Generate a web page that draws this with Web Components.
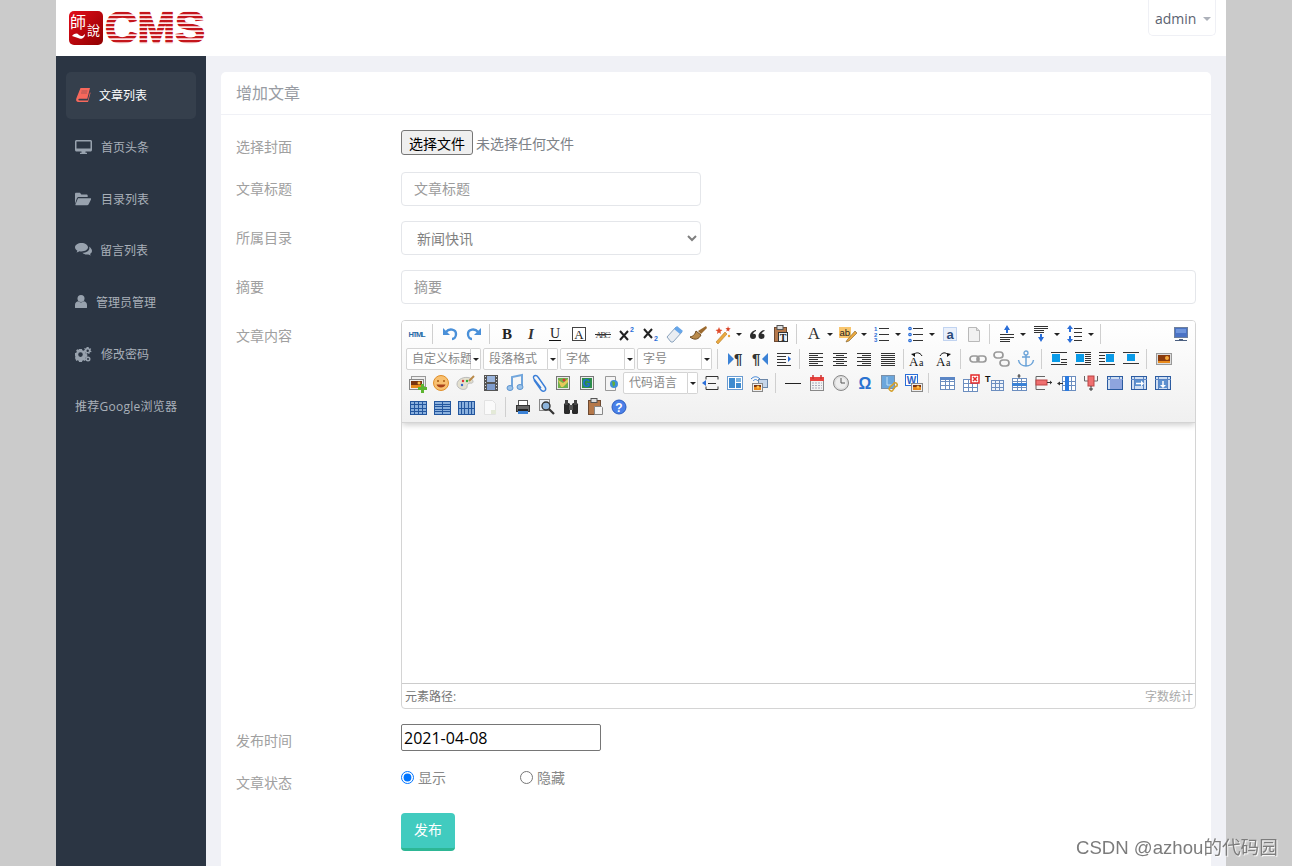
<!DOCTYPE html>
<html lang="zh">
<head>
<meta charset="utf-8">
<title>增加文章</title>
<style>
  html, body { margin: 0; height: 866px; overflow: hidden; background: #cbcbcb; }
  body { padding-left: 56px; font-family: "Open Sans", "Noto Sans CJK SC", sans-serif; }
</style>
</head>
<body>
<cms-app>
  <cms-header slot="header">admin</cms-header>
  <side-nav slot="nav">
    <nav-item active icon="book" w="13">文章列表</nav-item>
    <nav-item icon="desktop" w="15">首页头条</nav-item>
    <nav-item icon="folder" w="15" style="margin-bottom:4px">目录列表</nav-item>
    <nav-item icon="comments" w="14">留言列表</nav-item>
    <nav-item icon="user" w="10">管理员管理</nav-item>
    <nav-item icon="cogs" w="15">修改密码</nav-item>
    <nav-item style="letter-spacing:.25px">推荐Google浏览器</nav-item>
  </side-nav>
  <form-card slot="main" heading="增加文章">
    <form-row label="选择封面" style="--h:42px"><file-field></file-field></form-row>
    <form-row label="文章标题" style="--h:49px"><text-field placeholder="文章标题" style="width:300px;flex:none"></text-field></form-row>
    <form-row label="所属目录" style="--h:49px"><select-field style="width:300px"></select-field></form-row>
    <form-row label="摘要" style="--h:50px"><text-field placeholder="摘要"></text-field></form-row>
    <form-row label="文章内容" style="--h:404px;--lt:5px"><rich-editor></rich-editor></form-row>
    <form-row label="发布时间" style="--h:42px"><date-field value="2021-04-08"></date-field></form-row>
    <form-row label="文章状态" style="--h:47px">
      <radio-field checked style="width:119px">显示</radio-field><radio-field>隐藏</radio-field>
    </form-row>
    <form-row style="--h:40px"><submit-button>发布</submit-button></form-row>
  </form-card>
</cms-app>

<script>
function shadow(el, html) {
  el.attachShadow({ mode: 'open' }).innerHTML = html;
}

class CmsApp extends HTMLElement {
  constructor() {
    super();
    shadow(this, `
    <style>
      :host { display: grid; width: 1170px; height: 866px; grid-template: 56px 1fr / 150px 1fr; background: #f0f1f6; }
      .top { grid-column: 1 / 3; }
      .mark { position: fixed; left: 1076px; top: 835px; font: 18.6px/26px "Liberation Sans", "Noto Sans CJK SC", sans-serif;
        color: #7c7c7c; text-shadow: 1px 1px 1px #fff; white-space: nowrap; }
    </style>
    <div class="top"><slot name="header"></slot></div>
    <slot name="nav"></slot>
    <slot name="main"></slot>
    <div class="mark">CSDN @azhou的代码园</div>`);
  }
}

class CmsHeader extends HTMLElement {
  constructor() {
    super();
    shadow(this, `
    <style>
      :host { display: flex; height: 56px; background: #fff; justify-content: space-between; align-items: flex-start; padding: 0 10px 0 13px; box-sizing: border-box; }
      svg { display: block; }
      svg text { font-family: "Liberation Sans", sans-serif; }
      svg text.logo-cjk { font-family: "Noto Sans CJK TC", sans-serif; }
      .user { width: 68px; height: 36px; box-sizing: border-box; border: 1px solid #eff0f5; border-top: 0; border-radius: 0 0 5px 5px;
        display: flex; align-items: center; padding: 2px 0 0 6px; gap: 6px; font-size: 14px; color: #5b6270; }
      .caret { width: 0; height: 0; border: 4px solid transparent; border-top-color: #adb1ba; border-bottom: 0; margin-left: 1px; }
    </style>
    <svg width="140" height="56" viewBox="0 0 140 56">
      <defs>
        <linearGradient id="red" x1="0" y1="0" x2="1" y2="1"><stop offset="0" stop-color="#e30d1a"/><stop offset="1" stop-color="#8f0000"/></linearGradient>
        <pattern id="stripe" width="4" height="4" patternUnits="userSpaceOnUse">
          <rect width="4" height="2.500" fill="#c4161c"/><rect y="2.500" width="4" height="1.500" fill="#fbe6e6"/>
        </pattern>
      </defs>
      <rect y="11" width="34" height="34" rx="5" fill="url(#red)"/>
      <text class="logo-cjk" x="1" y="28" font-size="16" fill="#fff">師</text>
      <text class="logo-cjk" x="18" y="35" font-size="13" fill="#fff">說</text>
      <path d="M3 36c3-3 5-3 7-1 3 2 4 1 6-1 0 4-4 6-7 4-2-1-4-1-6-2z" fill="#fff"/>
      <text x="36" y="43" font-size="45" font-weight="700" fill="url(#stripe)" stroke="url(#stripe)" stroke-width="1.600">CMS</text>
    </svg>
    <div class="user"><slot></slot><span class="caret"></span></div>`);
  }
}

class SideNav extends HTMLElement {
  constructor() {
    super();
    shadow(this, `
    <style>:host { display: block; background: #2b3543; padding: 16px 10px 0; box-sizing: border-box; }</style>
    <slot></slot>`);
  }
}

const NAV_ICONS = {
  book: '<path d="M4.500 0H14l-2.700 10.800H3.300c-1.300 0-1.300 1.700 0 1.700h8.500L14 4.300l.5.700-2.500 9H2.500C.5 14-.3 12.500.3 10.500z"/><path d="M5.500 3h6M5 5h6" stroke="#2b3543" stroke-width=".8" opacity=".45"/>',
  desktop: '<path fill-rule="evenodd" d="M1.500 0h14c.8 0 1.500.7 1.500 1.500v8.500c0 .8-.7 1.500-1.500 1.500H10.500v1.200h1.500V14H5v-1.300h1.500v-1.200H1.500C.7 11.500 0 10.800 0 10V1.500C0 .7.700 0 1.500 0zM1.500 1.500V8.500h14V1.500z"/>',
  folder: '<path d="M0 12V2c0-.7.5-1.200 1.200-1.200H5l1.300 1.700h5.200c.7 0 1.200.5 1.200 1.200v1.300H4C3 5 2.300 5.500 1.900 6.300z"/><path d="M3 6.200h12.300c.7 0 1 .6.700 1.200l-2.500 5.100c-.3.5-.7.800-1.300.800H1.200c-.7 0-1-.6-.7-1.100z"/>',
  comments: '<path d="M6.500 0C3 0 0 1.900 0 4.300c0 1.400 1 2.600 2.400 3.400-.2.700-.6 1.300-1 1.800 1.200-.2 2.200-.7 3-1.200.7.100 1.400.2 2.100.2 3.600 0 6.500-1.900 6.500-4.200S10.100 0 6.500 0z"/><path d="M14 3.500c.3.400.4 1 .4 1.500 0 2.800-3.200 4.700-7 4.800.9 1.100 2.600 1.800 4.500 1.800.5 0 1-.1 1.500-.2.700.5 1.500.8 2.500 1-.4-.4-.7-.9-.8-1.500 1.100-.7 1.900-1.700 1.900-2.900 0-1.700-1.100-3.100-3-4.500z"/>',
  user: '<circle cx="6" cy="3.500" r="3.500"/><path d="M0 12.500V10c0-2 1.300-3.500 3-3.700.8.700 1.900 1.100 3 1.100s2.200-.4 3-1.100c1.700.2 3 1.700 3 3.700v2.500c0 .5-.4.500-1 .5H1c-.6 0-1 0-1-.5z"/>',
  cogs: '<path fill-rule="evenodd" d="M4 3h3l.3 1.300 1.200.5 1.200-.7 1.500 1.500-.7 1.200.5 1.200 1.300.3v2.400l-1.300.3-.5 1.200.7 1.200-1.500 1.500-1.200-.7-1.200.5-.3 1.300H4l-.3-1.300-1.200-.5-1.200.7L0 11.900l.4-1.200L0 9.500V7l1.300-.2.500-1.200-.7-1.200 1.200-1.200 1.200.6.300-.1zM5.500 6.300a2.300 2.300 0 100 4.600 2.300 2.300 0 000-4.600z" transform="translate(0 -1)"/><path fill-rule="evenodd" d="M13 0l.8.2.1 1 .9.5.9-.5.5.8-.6.8v1l.9.5-.3.900-1-.1-.7.700.1 1-.9.300-.5-.9h-1l-.6.800-.9-.4.2-1-.6-.7-1 .1-.2-.9.8-.6v-1l-.7-.6.4-.8 1 .3.800-.5.200-1zM12.700 2.600a1.200 1.200 0 100 2.400 1.200 1.200 0 000-2.400z"/><circle cx="13" cy="12" r="2.500"/><circle cx="13" cy="12" r="1" fill="#2b3543"/>'
};

class NavItem extends HTMLElement {
  constructor() {
    super();
    const icon = NAV_ICONS[this.getAttribute('icon')];
    const w = this.getAttribute('w');
    shadow(this, `
    <style>
      :host { display: flex; align-items: center; height: 47px; box-sizing: border-box; margin-bottom: 5px; padding: 0 0 2px 9px; gap: 11px;
        border-radius: 5px; font-size: 12px; color: #a9b0b9; white-space: nowrap; }
      :host([active]) { background: #353f4c; color: #fff; padding-left: 10px; gap: 10px; }
      svg { fill: #98a2ae; overflow: visible; flex: none; }
      :host([active]) svg { fill: #f7685c; }
    </style>
    ${icon ? `<svg width="${w}" height="14" viewBox="0 0 ${w} 14">${icon}</svg>` : ''}
    <span><slot></slot></span>`);
  }
}

class FormCard extends HTMLElement {
  constructor() {
    super();
    shadow(this, `
    <style>
      :host { display: block; margin: 16px 15px 0; background: #fff; border-radius: 5px 5px 0 0; }
      h2 { margin: 0; height: 43px; box-sizing: border-box; padding-left: 15px; font: inherit; font-size: 16px; line-height: 42px; color: #989ca3; border-bottom: 1px solid #f0f1f6; }
      .body { padding: 15px 15px 0; }
    </style>
    <h2>${this.getAttribute('heading')}</h2>
    <div class="body"><slot></slot></div>`);
  }
}

class FormRow extends HTMLElement {
  constructor() {
    super();
    shadow(this, `
    <style>
      :host { display: grid; grid-template-columns: 165px 1fr; height: var(--h); }
      label { font-size: 14px; line-height: 21px; padding-top: var(--lt, 6px); color: #a0a0a0; }
      .ctl { display: flex; align-items: flex-start; min-width: 0; }
    </style>
    <label>${this.getAttribute('label') || ''}</label>
    <div class="ctl"><slot></slot></div>`);
  }
}

class FileField extends HTMLElement {
  constructor() {
    super();
    shadow(this, `
    <style>
      :host { display: flex; align-items: center; gap: 3px; font-size: 14px; color: #7d8288; }
      button { width: 72px; height: 25px; padding: 0; box-sizing: border-box; font: inherit; color: #000; background: #efefef; border: 1px solid #767676; border-radius: 3px; }
    </style>
    <button type="button">选择文件</button><span>未选择任何文件</span>`);
  }
}

class TextField extends HTMLElement {
  constructor() {
    super();
    shadow(this, `
    <style>
      :host { display: block; flex: 1; }
      input { display: block; width: 100%; height: 34px; box-sizing: border-box; padding: 0 12px 2px; font: inherit; font-size: 14px; border: 1px solid #e4e6ea; border-radius: 4px; outline: 0; background: #fff; }
      input::placeholder { color: #9b9b9b; opacity: 1; }
    </style>
    <input type="text" placeholder="${this.getAttribute('placeholder')}">`);
  }
}

class SelectField extends HTMLElement {
  constructor() {
    super();
    shadow(this, `
    <style>
      :host { display: block; }
      select { display: block; width: 100%; height: 34px; box-sizing: border-box; padding: 0 8px 0 11px; font: inherit; font-size: 14px; color: #7f7f7f; border: 1px solid #e4e6ea; border-radius: 4px; background: #fff; outline: 0; }
    </style>
    <select><option>新闻快讯</option></select>`);
  }
}

class DateField extends HTMLElement {
  constructor() {
    super();
    shadow(this, `
    <style>
      :host { display: block; }
      input { display: block; width: 200px; height: 27px; box-sizing: border-box; padding: 0 2px; font: 16px "Open Sans", sans-serif; color: #000; border: 1px solid #767676; border-radius: 2px; outline: 0; }
    </style>
    <input type="text" value="${this.getAttribute('value')}">`);
  }
}

class RadioField extends HTMLElement {
  constructor() {
    super();
    const checked = this.hasAttribute('checked') ? 'checked' : '';
    shadow(this, `
    <style>
      :host { display: flex; align-items: center; font-size: 14px; color: #888; height: 22px; }
      input { width: 13px; height: 13px; margin: 0 4px 0 0; accent-color: #0075ff; }
    </style>
    <input type="radio" name="status" ${checked}><slot></slot>`);
  }
}

class SubmitButton extends HTMLElement {
  constructor() {
    super();
    shadow(this, `
    <style>
      :host { display: block; }
      button { display: block; width: 54px; height: 38px; padding: 0 0 3px; font: inherit; font-size: 14px; color: #fff; background: #41cbbf; border: 0; border-bottom: 3px solid #2db795; border-radius: 4px; }
    </style>
    <button type="button"><slot></slot></button>`);
  }
}

// toolbar icons, all on a 20x20 box
const ink = '#333';
const blue = '#3b82d6';
const lines = (x1, x2, ys, c = ink) => `<path d="${ys.map(y => `M${x1} ${y}.5H${x2}`).join('')}" stroke="${c}" fill="none"/>`;
const glyph = (t, x, y, size, extra = '') => `<text x="${x}" y="${y}" font-size="${size}" ${extra}>${t}</text>`;
const serif = 'class="s"';
const grid = (x, y, w, h, cols, rows, stroke = '#6c8ebf', fill = '#fff') => {
  let d = '';
  for (let i = 1; i < cols; i++) d += `M${x + Math.round(w * i / cols)}.5 ${y}v${h}`;
  for (let i = 1; i < rows; i++) d += `M${x} ${y + Math.round(h * i / rows)}.5h${w}`;
  return `<rect x="${x}.5" y="${y}.5" width="${w}" height="${h}" fill="${fill}" stroke="${stroke}"/><path d="${d}" stroke="${stroke}" fill="none"/>`;
};
const picture = (x, y, w, h) => `<rect x="${x}.5" y="${y}.5" width="${w}" height="${h}" fill="#eee" stroke="#888"/><rect x="${x + 2}" y="${y + 2}" width="${w - 3}" height="${h - 3}" fill="#7a3410"/><path d="M${x + 2} ${y + h - 4}h${w - 3}v3h-${w - 3}z" fill="#e88a1c"/><circle cx="${x + w - 4}" cy="${y + 4}" r="1.500" fill="#ffc04a"/>`;
// the merge-cell icons share one frame: dark edge, pale strips, blue middle
const cellFrame = `<rect x="2.500" y="3.500" width="15" height="13" fill="#cfdef2" stroke="#2b5ba0"/><path d="M2 6.500h16M5.500 4v12M14.500 4v12" stroke="#5b86c5"/>`;

const ICONS = {
  html: glyph('HTML', 10, 13, 7.5, 'font-weight="700" text-anchor="middle" fill="#2b6ca8" textLength="17"'),
  undo: `<path d="M6 8c3-4 10-3 10 2 0 3-2 5-4 5" fill="none" stroke="#4a90d9" stroke-width="2.400"/><path d="M3 4v7h7z" fill="#4a90d9"/>`,
  redo: `<g transform="translate(20) scale(-1 1)"><path d="M6 8c3-4 10-3 10 2 0 3-2 5-4 5" fill="none" stroke="#4a90d9" stroke-width="2.400"/><path d="M3 4v7h7z" fill="#4a90d9"/></g>`,
  bold: glyph('B', 10, 15, 15, `${serif} font-weight="700" text-anchor="middle" fill="#222"`),
  italic: glyph('I', 10, 15, 15, `${serif} font-weight="700" font-style="italic" text-anchor="middle" fill="#333"`),
  underline: glyph('U', 10, 14, 14, `${serif} text-anchor="middle" fill="#222"`) + lines(4, 16, [16], '#111'),
  fontborder: `<rect x="3.500" y="3.500" width="13" height="13" fill="#fff" stroke="#444"/>` + glyph('A', 10, 15, 13, `${serif} text-anchor="middle" fill="#222"`),
  strike: glyph('ABC', 10, 14, 9, `${serif} text-anchor="middle" fill="#444" textLength="15"`) + lines(2, 18, [10], '#333'),
  sup: `<path d="M3 7l8 9m0-9l-8 9" stroke="#222" stroke-width="2" fill="none"/>` + glyph('2', 13, 8, 7, 'font-weight="700" fill="#2a6ed8"'),
  sub: `<path d="M3 5l8 9m0-9l-8 9" stroke="#222" stroke-width="2" fill="none"/>` + glyph('2', 13, 17, 7, 'font-weight="700" fill="#2a6ed8"'),
  eraser: `<path d="M2 13l9-10 6 5-9 10H6z" fill="#e9edf2" stroke="#8ba3bd"/><path d="M9 5l6 5 3-3-6-5z" fill="#66a6ea"/>`,
  brush: `<path d="M1 13c4-1 5-3 6-6l5 4c-2 4-6 6-11 2z" fill="#b98a4a" stroke="#6f4c22"/><path d="M9 7l8-5 1 2-6 6z" fill="#9c6a2e"/>`,
  wand: `<path d="M3 18l9-10 2 2-9 10z" fill="#eba93f" stroke="#b07a2a" stroke-width=".6"/><path d="M6 3l1 2.500 2.500.5-2 1.500.3 2.500L6 8.500 4 10l.5-2.500-2-1.500 2.500-.5z" fill="#e04b2a"/><path d="M15 2l.7 2 2 .5-1.600 1.200.2 2-1.300-1.100-1.700 1 .6-2-1.400-1.300 2-.2z" fill="#d9452a"/><circle cx="16" cy="12" r="1.200" fill="#e9a23b"/>`,
  quote: `<g fill="#2c2c2c"><path d="M9 6c-3 .5-6 3-6 6 0 2 1 3 3 3s3-1.200 3-3-1.400-2.500-3-2c.2-1.200 1.500-2.500 3-3z"/><path d="M17.500 6c-3 .5-6 3-6 6 0 2 1 3 3 3s3-1.200 3-3-1.400-2.500-3-2c.2-1.200 1.500-2.500 3-3z"/></g>`,
  paste: `<rect x="3.500" y="3.500" width="12" height="14" fill="#b5784a" stroke="#6d4a32"/><rect x="6" y="1.500" width="6" height="4" fill="#ddd" stroke="#555"/><rect x="7.500" y="8.500" width="9" height="9" fill="#eef3f8" stroke="#333"/>` + glyph('T', 12, 16.500, 10, `${serif} font-weight="700" text-anchor="middle" fill="#222"`),
  fontcolor: glyph('A', 10, 15, 17, `${serif} text-anchor="middle" fill="#2e2e2e"`),
  hilite: `<rect x="1" y="3" width="12" height="11" fill="#f8c56d"/>` + glyph('ab', 1.500, 12, 9.500, 'font-weight="400" fill="#222"') + `<path d="M9 16l8-9 2 2-8 8-3 1z" fill="#eba93f" stroke="#7b5d2a" stroke-width=".6"/>`,
  ol: glyph('1', 2, 7, 6, 'font-weight="700" fill="#2a6ed8"') + glyph('2', 2, 12.500, 6, 'font-weight="700" fill="#2a6ed8"') + glyph('3', 2, 18, 6, 'font-weight="700" fill="#2a6ed8"') + lines(7, 17, [4, 10, 16]),
  ul: `<g fill="none" stroke="#2a6ed8" stroke-width="1.300"><circle cx="4" cy="4.500" r="1.200"/><circle cx="4" cy="10.500" r="1.200"/><circle cx="4" cy="16.500" r="1.200"/></g>` + lines(7, 17, [4, 10, 16]),
  selectall: `<rect x="3.500" y="3.500" width="13" height="13" fill="#eaf0fb" stroke="#8fb0e4" stroke-dasharray="1 1"/>` + glyph('a', 10, 14.500, 13, 'font-weight="700" text-anchor="middle" fill="#2b4a7a"'),
  cleardoc: `<path d="M4.500 3.500h8l3 3v11h-11z" fill="#f1f1f1" stroke="#b9b9b9"/><path d="M12.500 3.500v3h3" fill="#ddd" stroke="#b9b9b9"/>`,
  rowtop: `<path d="M10 1l3 5h-2v3H9V6H7z" fill="#2a6ed8"/>` + lines(3, 17, [10, 13]) + lines(3, 13, [15, 17]),
  rowbottom: lines(3, 17, [2, 4]) + lines(3, 13, [6, 8]) + `<path d="M10 18l3-5h-2v-3H9v3H7z" fill="#2a6ed8"/>`,
  lineheight: `<path d="M5 1l3 4H6v3H4V5H2zM5 19l3-4H6v-3H4v3H2z" fill="#2a6ed8"/>` + lines(9, 17, [4, 8, 12, 16]),
  fullscreen: `<rect x="3.500" y="3.500" width="13" height="10" fill="#4a72c4" stroke="#6d7f9c"/><path d="M5 5h10v4H5z" fill="#6f95dc"/><path d="M8 15.500h4M4 16.500h12" stroke="#4b5f80"/>`,
  ltr: `<path d="M2 4l6 6-6 6z" fill="${blue}"/>` + glyph('¶', 8, 15, 15, 'font-weight="700" fill="#333"'),
  rtl: glyph('¶', 2, 15, 15, 'font-weight="700" fill="#333"') + `<path d="M18 4l-6 6 6 6z" fill="${blue}"/>`,
  indent: lines(3, 17, [4, 16]) + lines(3, 12, [7, 10, 13]) + `<path d="M17 10l-3-3v6z" fill="#2a6ed8"/>`,
  left: lines(3, 17, [4, 8, 12, 16]) + lines(3, 12, [6, 10, 14]),
  center: lines(3, 17, [4, 8, 12, 16]) + lines(6, 14, [6, 10, 14]),
  right: lines(3, 17, [4, 8, 12, 16]) + lines(8, 17, [6, 10, 14]),
  justify: lines(3, 17, [4, 6, 8, 10, 12, 14, 16]),
  aup: glyph('A', 1, 17, 13, `${serif} fill="#111"`) + glyph('a', 11, 17, 10, `${serif} fill="#111"`) + `<path d="M6 6c1-3 6-3 8 1" fill="none" stroke="#111"/><path d="M3 5l4-1v4z" fill="#111"/>`,
  adown: glyph('A', 1, 17, 13, `${serif} fill="#111"`) + glyph('a', 11, 17, 10, `${serif} fill="#111"`) + `<path d="M5 7c2-4 6-4 8-1" fill="none" stroke="#111"/><path d="M16 5l-4-1v4z" fill="#111"/>`,
  link: `<g fill="none" stroke="#9a9a9a" stroke-width="1.700"><rect x="2" y="7" width="9" height="6" rx="3"/><rect x="9" y="7" width="9" height="6" rx="3"/></g>`,
  unlink: `<g fill="none" stroke="#9a9a9a" stroke-width="1.700"><rect x="2" y="3" width="9" height="6" rx="3"/><rect x="8" y="11" width="9" height="6" rx="3"/></g>`,
  anchor: `<path d="M10 6v11M6 8h8M2.500 11c.5 4 4 6 7.500 6s7-2 7.500-6" fill="none" stroke="#6ba3d8" stroke-width="1.500"/><circle cx="10" cy="4" r="2" fill="none" stroke="#6ba3d8" stroke-width="1.300"/>`,
  imgleft: `<rect x="3" y="5" width="8" height="8" fill="#0a9be8"/>` + lines(2, 18, [3]) + lines(12, 18, [10, 13]) + lines(2, 18, [15]),
  imgright: `<rect x="3" y="5" width="8" height="8" fill="#0a9be8"/>` + lines(2, 18, [3, 15]) + lines(12, 18, [5, 7, 9, 11, 13]),
  imgnone: `<rect x="9" y="5" width="8" height="8" fill="#0a9be8"/>` + lines(2, 18, [3, 15]) + lines(2, 8, [6, 9, 12]),
  imgcenter: `<rect x="6" y="5" width="8" height="7" fill="#0a9be8"/>` + lines(2, 18, [3, 14]),
  image: `<rect x="2.500" y="4.500" width="15" height="11" fill="#ddd" stroke="#999"/><rect x="4" y="6" width="12" height="8" fill="#8a3a0c"/><path d="M4 12h12v2H4z" fill="#e88a1c"/><circle cx="13" cy="9" r="2" fill="#f4a93c"/>`,
  insertimage: `<rect x="4.500" y="3.500" width="14" height="10" fill="#eee" stroke="#999"/>` + picture(2, 6, 14, 10) + `<path d="M14 11h3v3h3v3h-3v3h-3v-3h-3v-3h3z" fill="#5cb531"/>`,
  emotion: `<circle cx="10" cy="10" r="7.500" fill="#f8c070" stroke="#e08f2a"/><circle cx="7" cy="8" r="1" fill="#a85a10"/><circle cx="13" cy="8" r="1" fill="#a85a10"/><path d="M5.500 11.500h9c-1 4-8 4-9 0z" fill="#a8421a"/>`,
  scrawl: `<path d="M2 11c0-5 8-8 13-6 4 2 4 6 0 5-2 0-3 2-3 4s-3 3-6 2-4-3-4-5z" fill="#e4e0cf" stroke="#bbb"/><circle cx="8" cy="8" r="1.200" fill="#d33"/><circle cx="12" cy="8" r="1.200" fill="#3a3"/><circle cx="7" cy="12" r="1.200" fill="#36c"/><path d="M14 8l5-5" stroke="#b98a4a" stroke-width="2"/>`,
  video: `<rect x="3" y="2" width="14" height="16" fill="#555"/><rect x="6" y="3" width="8" height="6" fill="#9ab4dc"/><rect x="6" y="11" width="8" height="6" fill="#7f9ccc"/><path d="M4 3.500h1M4 6.500h1M4 9.500h1M4 12.500h1M4 15.500h1M15 3.500h1M15 6.500h1M15 9.500h1M15 12.500h1M15 15.500h1" stroke="#ddd"/>`,
  music: `<path d="M7 14V4l10-2v11" fill="none" stroke="#72a6dc" stroke-width="2"/><ellipse cx="5" cy="15" rx="3" ry="2.500" fill="#9cc4ea" stroke="#5d94cf"/><ellipse cx="15" cy="14" rx="3" ry="2.500" fill="#9cc4ea" stroke="#5d94cf"/>`,
  clip: `<path d="M5 7l7 10c3 3 6 0 4-3L9 4C7 1 3 3 5 6l7 9" fill="none" stroke="#3b7fd8" stroke-width="1.400"/>`,
  map: `<rect x="3.500" y="3.500" width="13" height="13" fill="#e9e9e9" stroke="#777"/><rect x="5" y="5" width="10" height="10" fill="#6fb04c"/><path d="M5 7l5 3 5-4v3l-5 5H8z" fill="#e6c85a"/><circle cx="11" cy="7" r="1.500" fill="#d33"/>`,
  gmap: `<rect x="3.500" y="3.500" width="13" height="13" fill="#eee" stroke="#777"/><rect x="5" y="5" width="10" height="10" fill="#2f8f4a"/>` + glyph('G', 10, 14, 10, 'font-weight="700" text-anchor="middle" fill="#1c6bd6"'),
  webapp: `<path d="M4.500 3.500h10v14h-10z" fill="#f4f4f4" stroke="#999"/><circle cx="13" cy="11" r="4" fill="#3d8fd8"/><path d="M11 8l3 1v3l-2 2z" fill="#5fae3c"/>`,
  pagebreak: `<path d="M5 6.500V3.500h12v3M5 13.500v3h12v-3" fill="none" stroke="#333"/>` + lines(7, 15, [10], '#333') + `<path d="M1 10l4-3v6z" fill="#2a6ed8"/>`,
  template: `<rect x="2.500" y="3.500" width="15" height="13" fill="#fff" stroke="#6a9bd0"/><rect x="4" y="5" width="6" height="10" fill="#3e8bcf"/><rect x="11" y="5" width="5" height="4" fill="#7ab2e0"/><rect x="11" y="10" width="5" height="5" fill="#3e8bcf"/>`,
  background: `<path d="M2 6c3-3 6-3 9 0M4 8c2-2 3-2 5 0" fill="none" stroke="#3b82d6"/><rect x="9.500" y="6.500" width="9" height="8" fill="#c6d6ea" stroke="#6c87a8"/>` + picture(3, 10, 10, 8),
  hr: lines(2, 18, [10], '#222'),
  date: `<rect x="3.500" y="4.500" width="13" height="13" fill="#f2f2f2" stroke="#888"/><rect x="3" y="4" width="14" height="4" fill="#e8433f"/><path d="M6 2v4M14 2v4" stroke="#c33" stroke-width="1.500"/><path d="M5 10h10M5 12.500h10M5 15h10" stroke="#aab" stroke-dasharray="2 1"/>`,
  time: `<circle cx="10" cy="10" r="7.500" fill="#ddd" stroke="#888"/><circle cx="10" cy="10" r="5.500" fill="#eee"/><path d="M10 5v5h4" fill="none" stroke="#555"/>`,
  omega: glyph('Ω', 10, 15.500, 16, `text-anchor="middle" font-weight="700" fill="#2a72d0"`),
  snap: `<rect x="2.500" y="2.500" width="13" height="13" fill="#6ba6dc" stroke="#7b90a8"/><path d="M8 4v8h6" stroke="#bfe0f8" fill="none"/><path d="M10 16c1-4 4-3 5-6 2-1 4 1 3 3-2 0-3 2-4 4s-3 1-4-1z" fill="none" stroke="#d4a02c" stroke-width="1.600"/>`,
  word: `<rect x="2.500" y="1.500" width="12" height="11" fill="#fff" stroke="#2a6ed8"/>` + glyph('W', 8.500, 11, 10, 'font-weight="700" text-anchor="middle" fill="#2a5fc4"') + picture(8, 10, 11, 8),
  table: grid(3, 4, 14, 12, 3, 3, '#6c8ebf') + `<rect x="3" y="4" width="15" height="3" fill="#5b86c5"/>`,
  tabledel: grid(2, 6, 14, 12, 3, 3, '#6c8ebf') + `<rect x="10" y="2" width="8" height="8" fill="#fff" stroke="#e52a2a" stroke-width="1.500"/><path d="M12 4l4 4m0-4l-4 4" stroke="#e52a2a" stroke-width="1.500"/>`,
  tabletitle: glyph('T', 0, 9, 9, 'font-weight="700" fill="#111"') + grid(6, 7, 12, 10, 3, 3, '#6c8ebf', '#eef3fa'),
  rowins: grid(3, 5, 14, 12, 3, 4, '#6c8ebf') + `<rect x="3" y="10" width="15" height="3" fill="#3b82d6"/><path d="M10 1v4M8.500 3h3" stroke="#333"/>`,
  colright: `<path d="M3 3.500v13M3 3.500h9M3 16.500h9" fill="none" stroke="#666"/><rect x="3" y="7" width="11" height="5" fill="#ef6f6f" stroke="#b44"/><path d="M14 9.500h5" stroke="#333"/><path d="M19 9.500l-2-2v4z" fill="#333"/>`,
  colleft: grid(5, 3, 13, 14, 3, 3, '#6c8ebf') + `<rect x="8" y="3" width="4" height="15" fill="#2a7ae0"/><path d="M1 10.500h5" stroke="#333"/><path d="M0 10.500l3-2v4z" fill="#333"/>`,
  rowdel: `<path d="M3.500 3v5h13V3" fill="none" stroke="#666"/><rect x="7" y="3" width="6" height="10" fill="#ef6f6f" stroke="#b44"/><path d="M10 13v5M8 16h4" stroke="#333"/>`,
  merge: cellFrame + `<rect x="5" y="6" width="12" height="10" fill="#8ea4de"/>`,
  mergeright: cellFrame + `<rect x="6" y="7" width="8" height="6" fill="#5b90cf"/><path d="M7 10.500h6" stroke="#fff" stroke-width="1.500"/><path d="M15 10.500l-3-3v6z" fill="#fff"/>`,
  mergedown: cellFrame + `<rect x="6" y="7" width="8" height="8" fill="#5b90cf"/><path d="M10 8v5" stroke="#fff" stroke-width="1.500"/><path d="M10 15l-3-3h6z" fill="#fff"/>`,
  splitcell: grid(2, 4, 16, 13, 4, 4, '#23569e', '#8ab0dd'),
  splitrow: grid(2, 4, 16, 13, 2, 5, '#23569e', '#8ab0dd'),
  splitcol: grid(2, 4, 16, 13, 5, 2, '#23569e', '#8ab0dd'),
  faded: `<path d="M4.500 3.500h8l3 3v11h-11z" fill="#fafafa" stroke="#e2e2e2"/><path d="M11 13h5v4h-5z" fill="#e4ead8"/>`,
  print: `<rect x="5.500" y="3.500" width="9" height="6" fill="#fff" stroke="#555"/><rect x="3.500" y="8.500" width="13" height="6" fill="#666" stroke="#333"/><rect x="5" y="12" width="10" height="5" fill="#3b82d6"/><rect x="5" y="12" width="10" height="2" fill="#222"/>`,
  preview: `<rect x="2.500" y="2.500" width="10" height="11" fill="#e9eef6" stroke="#888"/><circle cx="9" cy="9" r="4" fill="#8cb3dc" stroke="#333" stroke-width="1.400"/><path d="M12 12l5 5" stroke="#333" stroke-width="2.200"/>`,
  search: `<rect x="3" y="6" width="6" height="11" rx="1.500" fill="#2a2a2a"/><rect x="11" y="6" width="6" height="11" rx="1.500" fill="#2a2a2a"/><rect x="4" y="3" width="3" height="5" fill="#444"/><rect x="13" y="3" width="3" height="5" fill="#444"/><rect x="8" y="8" width="4" height="5" fill="#555"/>`,
  drafts: `<rect x="3.500" y="3.500" width="12" height="14" fill="#b5784a" stroke="#6d4a32"/><rect x="6" y="1.500" width="6" height="4" fill="#ddd" stroke="#555"/><path d="M9.500 9.500h7l1 1v7h-8z" fill="#f4f4f4" stroke="#888"/>`,
  help: `<circle cx="10" cy="10" r="7" fill="#4a80e8" stroke="#2a5cc0"/>` + glyph('?', 10, 14.500, 12, 'font-weight="700" text-anchor="middle" fill="#fff"')
};

class ToolRow extends HTMLElement {
  constructor() {
    super();
    const parts = this.getAttribute('items').trim().split(/\s+/).map(t => this.item(t));
    shadow(this, `
    <style>
      :host { display: flex; align-items: center; height: 24px; }
      .btn { flex: none; width: 24px; height: 24px; display: flex; align-items: center; justify-content: center; }
      .btn.split { width: 34px; justify-content: flex-start; padding-left: 2px; box-sizing: border-box; }
      svg { display: block; flex: none; overflow: visible; }
      svg text { font-family: "Liberation Sans", sans-serif; }
      svg text.s { font-family: "Liberation Serif", serif; }
      .arrow { width: 0; height: 0; border: 3px solid transparent; border-top-color: #222; border-bottom: 0; margin-left: 3px; flex: none; }
      .sep { flex: none; height: 20px; box-sizing: border-box; padding-left: 3px; }
      .sep i { display: block; width: 1px; height: 20px; background: #cfcfcf; }
      .combo { flex: none; display: flex; width: 75px; height: 22px; box-sizing: border-box; font-size: 12px; color: #888; }
      .combo b { flex: 1; min-width: 0; font-weight: 400; line-height: 20px; padding-left: 5px; border: 1px solid #d4d4d4; border-radius: 2px 0 0 2px; background: #fff; white-space: nowrap; }
      .combo u { width: 9px; flex: none; border: 1px solid #d4d4d4; border-left: 0; border-radius: 0 2px 2px 0; background: #fff; display: flex; align-items: center; justify-content: center; }
      .combo u::after { content: ""; border: 3px solid transparent; border-top-color: #222; border-bottom: 0; }
      .push { flex: 1; }
    </style>
    ${parts.join('')}`);
  }

  item(t) {
    if (t === '>>') return '<span class="push"></span>';
    if (t[0] === '+') return `<span style="flex:none;width:${t.slice(1)}px"></span>`;
    if (t[0] === '|') return `<span class="sep" style="width:${t.slice(1) || 9}px"><i></i></span>`;
    if (t.startsWith('combo:')) return `<span class="combo"><b>${t.slice(6)}</b><u></u></span>`;
    const split = t.endsWith('^');
    const name = split ? t.slice(0, -1) : t;
    return `<span class="btn ${split ? 'split' : ''}"><svg width="20" height="20" viewBox="0 0 20 20">${ICONS[name]}</svg>${split ? '<span class="arrow"></span>' : ''}</span>`;
  }
}

class RichEditor extends HTMLElement {
  constructor() {
    super();
    const row1 = 'html | undo redo | bold italic underline fontborder strike sup sub eraser brush wand^ quote paste | fontcolor^ hilite^ ol^ ul^ selectall cleardoc | rowtop^ rowbottom^ lineheight^ | >> fullscreen';
    const row2 = '+1 combo:自定义标题 +2 combo:段落格式 +2 combo:字体 +2 combo:字号 +2 | +1 ltr rtl indent |8 left center right justify |6 aup +3 adown | link unlink anchor | imgleft imgright imgnone imgcenter | image';
    const row3 = 'insertimage emotion scrawl +2 video music clip map gmap webapp combo:代码语言 +1 pagebreak template background +1 | hr date time omega snap word | +1 table tabledel tabletitle rowins colright colleft rowdel merge mergeright mergedown';
    const row4 = '+1 splitcell splitrow splitcol faded | print preview search drafts help';
    shadow(this, `
    <style>
      :host { display: flex; flex-direction: column; flex: 1; height: 389px; box-sizing: border-box; border: 1px solid #d4d4d4; border-radius: 4px; background: #fff; overflow: hidden; }
      .bar { height: 102px; box-sizing: border-box; padding: 1px 2px 0 3px; background: linear-gradient(#fff, #f0f0f0); border-bottom: 1px solid #d4d4d4; box-shadow: 0 2px 6px rgba(0,0,0,.2); position: relative; }
      tool-row:nth-child(2) { margin-top: 1px; }
      .text { flex: 1; }
      .foot { height: 25px; box-sizing: border-box; border-top: 1px solid #ccc; display: flex; justify-content: space-between; align-items: center; padding: 0 2px 0 3px; font-size: 12px; color: #777; }
      .foot span + span { color: #aaa; }
    </style>
    <div class="bar">
      <tool-row items="${row1}"></tool-row>
      <tool-row items="${row2}"></tool-row>
      <tool-row items="${row3}"></tool-row>
      <tool-row items="${row4}"></tool-row>
    </div>
    <div class="text"></div>
    <div class="foot"><span>元素路径:</span><span>字数统计</span></div>`);
  }
}

customElements.define('cms-app', CmsApp);
customElements.define('cms-header', CmsHeader);
customElements.define('side-nav', SideNav);
customElements.define('nav-item', NavItem);
customElements.define('form-card', FormCard);
customElements.define('form-row', FormRow);
customElements.define('file-field', FileField);
customElements.define('text-field', TextField);
customElements.define('select-field', SelectField);
customElements.define('date-field', DateField);
customElements.define('radio-field', RadioField);
customElements.define('submit-button', SubmitButton);
customElements.define('tool-row', ToolRow);
customElements.define('rich-editor', RichEditor);
</script>
</body>
</html>
